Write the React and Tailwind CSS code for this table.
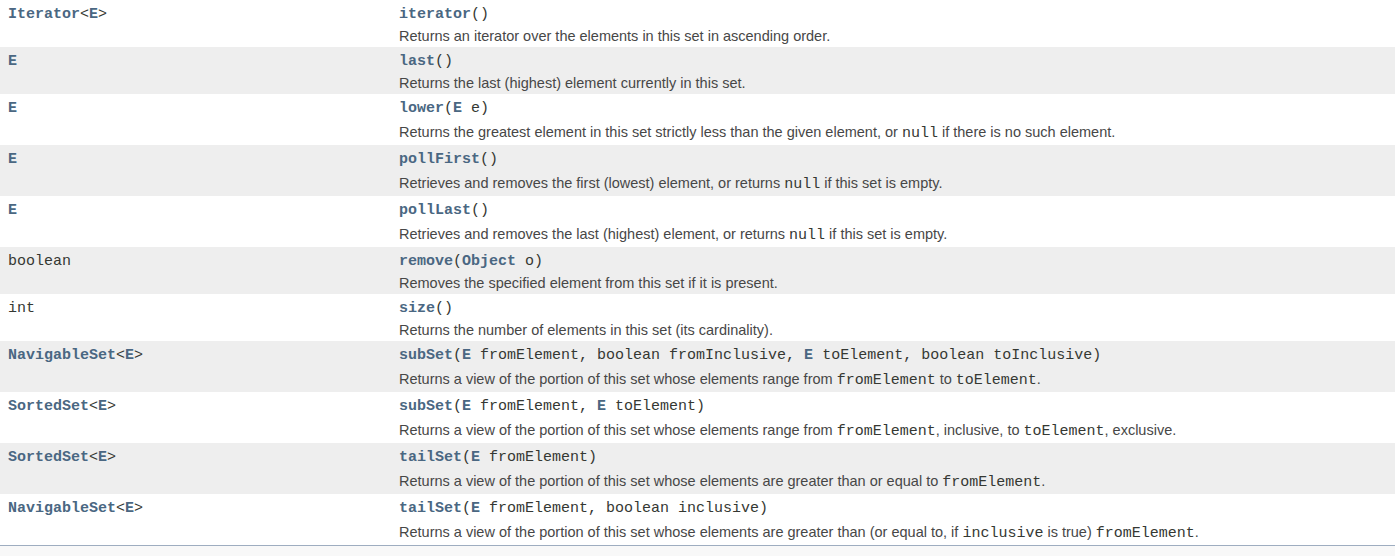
const mono = "font-['Liberation_Mono',monospace] text-[15px]";

const rows = [
  { type: [["Iterator", 1], ["<", 0], ["E", 1], [">", 0]], sig: [["iterator", 1], ["()", 0]], desc: ["Returns an iterator over the elements in this set in ascending order."] },
  { type: [["E", 1]], sig: [["last", 1], ["()", 0]], desc: ["Returns the last (highest) element currently in this set."] },
  { type: [["E", 1]], sig: [["lower", 1], ["(", 0], ["E", 1], [" e)", 0]], desc: ["Returns the greatest element in this set strictly less than the given element, or ", { c: "null" }, " if there is no such element."] },
  { type: [["E", 1]], sig: [["pollFirst", 1], ["()", 0]], desc: ["Retrieves and removes the first (lowest) element, or returns ", { c: "null" }, " if this set is empty."] },
  { type: [["E", 1]], sig: [["pollLast", 1], ["()", 0]], desc: ["Retrieves and removes the last (highest) element, or returns ", { c: "null" }, " if this set is empty."] },
  { type: [["boolean", 0]], sig: [["remove", 1], ["(", 0], ["Object", 1], [" o)", 0]], desc: ["Removes the specified element from this set if it is present."] },
  { type: [["int", 0]], sig: [["size", 1], ["()", 0]], desc: ["Returns the number of elements in this set (its cardinality)."] },
  { type: [["NavigableSet", 1], ["<", 0], ["E", 1], [">", 0]], sig: [["subSet", 1], ["(", 0], ["E", 1], [" fromElement, boolean fromInclusive, ", 0], ["E", 1], [" toElement, boolean toInclusive)", 0]], desc: ["Returns a view of the portion of this set whose elements range from ", { c: "fromElement" }, " to ", { c: "toElement" }, "."] },
  { type: [["SortedSet", 1], ["<", 0], ["E", 1], [">", 0]], sig: [["subSet", 1], ["(", 0], ["E", 1], [" fromElement, ", 0], ["E", 1], [" toElement)", 0]], desc: ["Returns a view of the portion of this set whose elements range from ", { c: "fromElement" }, ", inclusive, to ", { c: "toElement" }, ", exclusive."] },
  { type: [["SortedSet", 1], ["<", 0], ["E", 1], [">", 0]], sig: [["tailSet", 1], ["(", 0], ["E", 1], [" fromElement)", 0]], desc: ["Returns a view of the portion of this set whose elements are greater than or equal to ", { c: "fromElement" }, "."] },
  { type: [["NavigableSet", 1], ["<", 0], ["E", 1], [">", 0]], sig: [["tailSet", 1], ["(", 0], ["E", 1], [" fromElement, boolean inclusive)", 0]], desc: ["Returns a view of the portion of this set whose elements are greater than (or equal to, if ", { c: "inclusive" }, " is true) ", { c: "fromElement" }, "."] },
];

const Code = ({ parts }) => (
  <span className={`${mono} whitespace-pre`}>
    {parts.map(([t, link], i) =>
      link ? (
        <span key={i} className="font-bold text-[#4a6782]">{t}</span>
      ) : (
        <span key={i} className="text-[#353833]">{t}</span>
      )
    )}
  </span>
);

export default function App() {
  return (
    <div className="w-[1395px] h-[556px] bg-[#f8f8f8] font-['Liberation_Sans',Arial,sans-serif]">
      <div className="border-b border-[#9eadc0]">
        {rows.map((r, i) => {
          const tall = r.desc.some((d) => typeof d !== "string");
          return (
            <div
              key={i}
              className={`grid grid-cols-[391px_1fr] ${i % 2 ? "bg-[#eeeeee]" : "bg-white"} ${tall ? "h-[51px]" : "h-[47px]"}`}
            >
              <div className="pl-2 pt-[2px] leading-[22px]">
                <Code parts={r.type} />
              </div>
              <div className="pl-2 pt-[2px]">
                <div className="leading-[22px]">
                  <Code parts={r.sig} />
                </div>
                <div className={`text-[14.5px] text-[#474747] ${tall ? "leading-[25px]" : "leading-[21px]"}`}>
                  {r.desc.map((d, j) =>
                    typeof d === "string" ? (
                      <span key={j}>{d}</span>
                    ) : (
                      <span key={j} className={`${mono} text-[#353833]`}>{d.c}</span>
                    )
                  )}
                </div>
              </div>
            </div>
          );
        })}
      </div>
    </div>
  );
}
